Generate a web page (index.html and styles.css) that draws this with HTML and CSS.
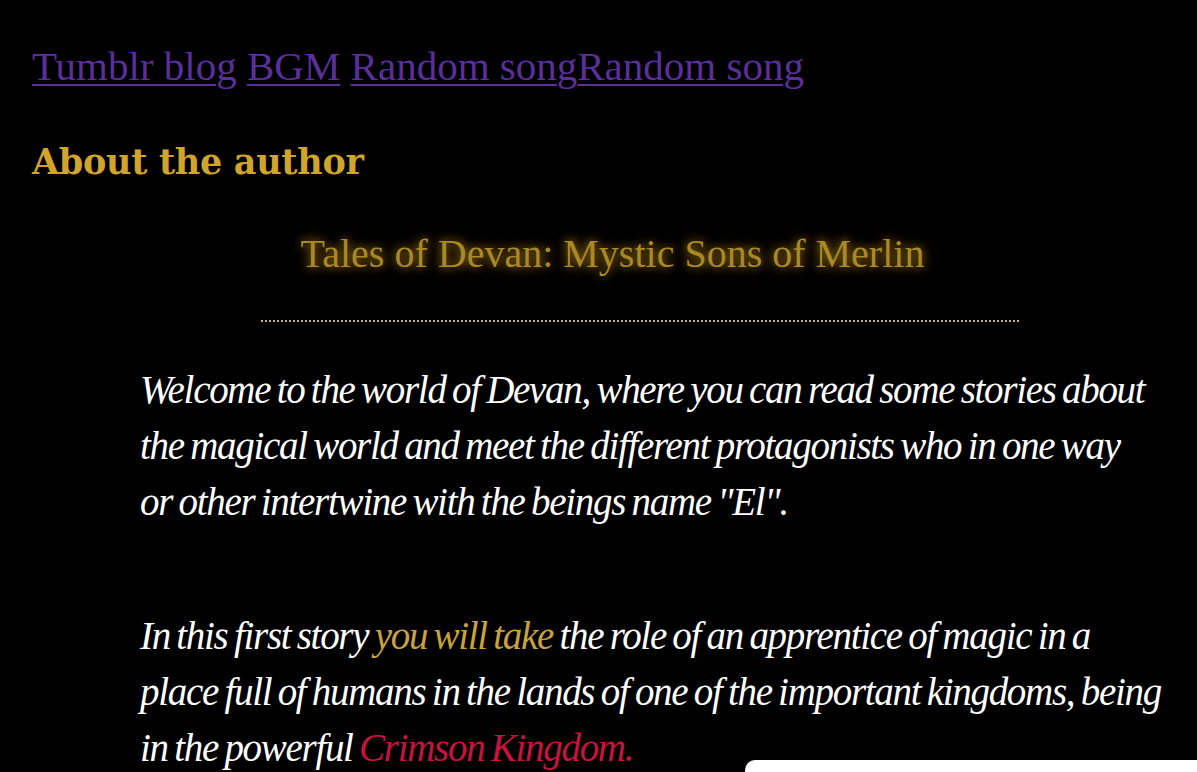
FILE: index.html
```html
<!DOCTYPE html>
<html>
<head>
<meta charset="utf-8">
<link rel="stylesheet" href="styles.css">
</head>
<body>
<nav class="links">
  <a href="#">Tumblr blog</a> <a href="#">BGM</a> <a href="#">Random song</a><a href="#">Random song</a>
</nav>
<h2 class="author">About the author</h2>
<main class="story">
  <h1 class="title">Tales of Devan: Mystic Sons of Merlin</h1>
  <hr class="divider">
  <div class="text">
    <p>Welcome to the world of Devan, where you can read some stories about the magical world and meet the different protagonists who in one way <span class="keep">or other</span> intertwine with the beings name "El".</p>
    <p>In this first story <span class="gold">you will take</span> the role of an apprentice of magic in a <span class="keep">place full</span> of humans in the lands of one of the important kingdoms, being in the powerful <span class="crimson">Crimson Kingdom.</span></p>
  </div>
</main>
<div class="popup"></div>
</body>
</html>
```
FILE: styles.css
```css
html, body {
  margin: 0;
  padding: 0;
  background: #000;
  overflow: hidden;
  height: 772px;
}
body {
  position: relative;
  padding: 0 32px;
  font-family: "Liberation Serif", serif;
}
.links {
  padding-top: 44px;
  font-size: 41px;
  line-height: 44px;
}
.links a {
  color: #5a2f9a;
  text-decoration: underline;
  text-decoration-thickness: 2px;
  text-underline-offset: 4px;
}
.author {
  margin: 54px 0 0;
  font-family: "DejaVu Serif", serif;
  font-size: 35px;
  line-height: 40px;
  font-weight: bold;
  color: #d1a42c;
  letter-spacing: -0.3px;
}
.story {
  display: flex;
  flex-direction: column;
  align-items: center;
  padding-left: 28px;
}
.title {
  margin: 50px 0 0;
  font-size: 40px;
  line-height: 44px;
  font-weight: normal;
  color: #a98828;
  text-shadow: 0 0 10px rgba(200, 150, 20, 0.8), 0 0 18px rgba(160, 110, 0, 0.5);
}
.divider {
  width: 758px;
  margin: 44px 0 0 54px;
  border: 0;
  border-top: 2px dotted #c9b276;
  height: 0;
}
.text {
  align-self: stretch;
  padding-left: 80px;
  margin-right: -15px;
  color: #fff;
  font-style: italic;
  font-size: 39px;
  line-height: 56px;
  letter-spacing: -1.3px;
  word-spacing: -2px;
}
.text p {
  margin: 40px 0 0;
}
.text p + p {
  margin-top: 78px;
}
.keep { white-space: nowrap; }
.gold { color: #c9a23c; }
.crimson { color: #c8143c; }
.popup {
  position: absolute;
  left: 745px;
  top: 760px;
  width: 480px;
  height: 40px;
  background: #fff;
  border-radius: 10px;
}
```
